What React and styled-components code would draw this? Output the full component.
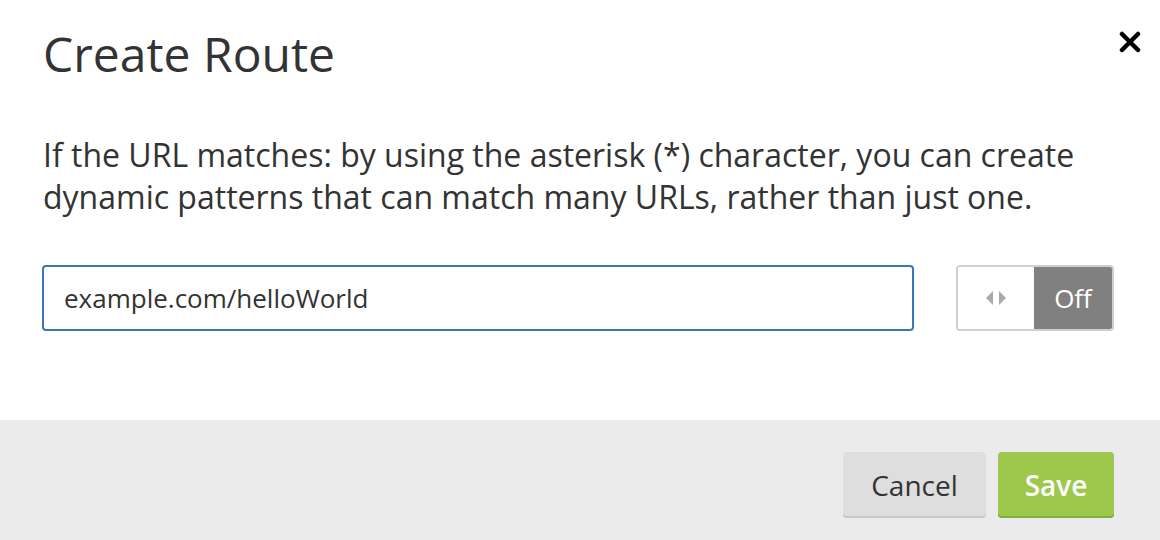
import React from 'react';
import styled, { createGlobalStyle } from 'styled-components';

const GlobalStyle = createGlobalStyle`
  html, body {
    margin: 0;
    padding: 0;
    background: #ffffff;
  }
  body {
    font-family: "Open Sans", "Liberation Sans", sans-serif;
    color: #333333;
  }
`;

const Modal = styled.div`
  width: 1160px;
  height: 540px;
  display: flex;
  flex-direction: column;
  background: #fff;
`;

const Body = styled.div`
  flex: 1;
  padding: 0 46px 0 42px;
  display: flex;
  flex-direction: column;
`;

const Header = styled.div`
  display: flex;
  justify-content: space-between;
  align-items: flex-start;
  height: 104px;
  padding: 22px 0 0 1px;
  box-sizing: border-box;
`;

const Title = styled.h1`
  margin: 0;
  font-size: 48px;
  font-weight: 400;
  line-height: 64px;
  color: #333;
`;

const CloseButton = styled.button`
  border: none;
  background: none;
  padding: 0;
  margin-top: 7px;
  margin-right: -29px;
  width: 26px;
  height: 26px;
  cursor: pointer;
  display: flex;
  align-items: center;
  justify-content: center;
`;

const Help = styled.p`
  margin: 30px 0 0 1px;
  font-size: 32px;
  line-height: 42px;
  color: #333;
`;

const Row = styled.div`
  display: flex;
  align-items: center;
  gap: 42px;
  margin-top: 47px;
`;

const UrlInput = styled.input`
  flex: 0 0 872px;
  height: 66px;
  box-sizing: border-box;
  border: 2px solid #3a78be;
  border-radius: 4px;
  padding: 0 20px;
  font-family: inherit;
  font-size: 26px;
  color: #333;
  outline: none;
`;

const Toggle = styled.div`
  display: flex;
  width: 159px;
  height: 66px;
  box-sizing: border-box;
  border: 2px solid #cfcfcf;
  border-radius: 4px;
  overflow: hidden;
`;

const ToggleHandle = styled.div`
  flex: 0 0 76px;
  background: #fff;
  display: flex;
  align-items: center;
  justify-content: center;
`;

const ToggleLabel = styled.div`
  flex: 1;
  background: #808080;
  color: #fff;
  font-size: 26px;
  display: flex;
  align-items: center;
  justify-content: center;
`;

const Footer = styled.div`
  height: 120px;
  background: #ebebeb;
  display: flex;
  justify-content: flex-end;
  align-items: flex-start;
  padding: 32px 46px 0 0;
  box-sizing: border-box;
  gap: 12px;
`;

const Button = styled.button`
  height: 66px;
  padding: 0 ${p => (p.$primary ? '26px' : '27px')};
  min-width: ${p => (p.$primary ? '116px' : '143px')};
  border: none;
  border-radius: 4px;
  font-family: inherit;
  font-size: 28px;
  font-weight: ${p => (p.$primary ? 600 : 400)};
  color: ${p => (p.$primary ? '#fff' : '#333')};
  background: ${p => (p.$primary ? '#9dc84b' : '#dedede')};
  box-shadow: inset 0 -2px 0 ${p => (p.$primary ? '#86ae3a' : '#c8c8c8')};
  cursor: pointer;
`;

const App = () => {
  return (
    <Modal>
      <GlobalStyle />
      <Body>
        <Header>
          <Title>Create Route</Title>
          <CloseButton aria-label="Close">
            <svg width="22" height="22" viewBox="0 0 22 22">
              <path d="M3 3 L19 19 M19 3 L3 19" stroke="#000" strokeWidth="4.5" strokeLinecap="round" />
            </svg>
          </CloseButton>
        </Header>
        <Help>
          If the URL matches: by using the asterisk (*) character, you can create dynamic patterns that can match many URLs, rather than just one.
        </Help>
        <Row>
          <UrlInput defaultValue="example.com/helloWorld" />
          <Toggle>
            <ToggleHandle>
              <svg width="24" height="14" viewBox="0 0 24 14">
                <path d="M9 0 L9 14 L2 7 Z" fill="#aaaaaa" />
                <path d="M15 0 L15 14 L22 7 Z" fill="#aaaaaa" />
              </svg>
            </ToggleHandle>
            <ToggleLabel>Off</ToggleLabel>
          </Toggle>
        </Row>
      </Body>
      <Footer>
        <Button>Cancel</Button>
        <Button $primary>Save</Button>
      </Footer>
    </Modal>
  );
};

export default App;
